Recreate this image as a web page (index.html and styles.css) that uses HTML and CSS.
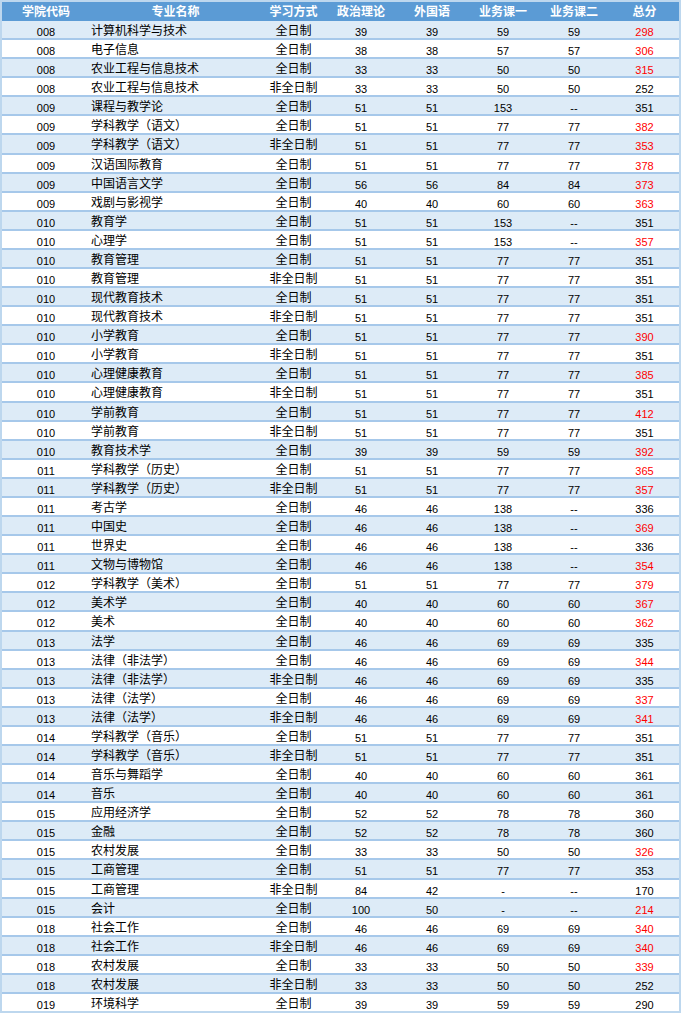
FILE: index.html
```html
<!DOCTYPE html>
<html lang="zh">
<head>
<meta charset="utf-8">
<title>分数线</title>
<link rel="stylesheet" href="styles.css">
</head>
<body>
<div class="sheet">
  <div class="row head"><span>学院代码</span><span>专业名称</span><span>学习方式</span><span>政治理论</span><span>外国语</span><span>业务课一</span><span>业务课二</span><span>总分</span></div>
  <div class="row"><span>008</span><span class="name">计算机科学与技术</span><span>全日制</span><span>39</span><span>39</span><span>59</span><span>59</span><span class="hi">298</span></div>
  <div class="row"><span>008</span><span class="name">电子信息</span><span>全日制</span><span>38</span><span>38</span><span>57</span><span>57</span><span class="hi">306</span></div>
  <div class="row"><span>008</span><span class="name">农业工程与信息技术</span><span>全日制</span><span>33</span><span>33</span><span>50</span><span>50</span><span class="hi">315</span></div>
  <div class="row"><span>008</span><span class="name">农业工程与信息技术</span><span>非全日制</span><span>33</span><span>33</span><span>50</span><span>50</span><span>252</span></div>
  <div class="row"><span>009</span><span class="name">课程与教学论</span><span>全日制</span><span>51</span><span>51</span><span>153</span><span>--</span><span>351</span></div>
  <div class="row"><span>009</span><span class="name">学科教学（语文）</span><span>全日制</span><span>51</span><span>51</span><span>77</span><span>77</span><span class="hi">382</span></div>
  <div class="row"><span>009</span><span class="name">学科教学（语文）</span><span>非全日制</span><span>51</span><span>51</span><span>77</span><span>77</span><span class="hi">353</span></div>
  <div class="row"><span>009</span><span class="name">汉语国际教育</span><span>全日制</span><span>51</span><span>51</span><span>77</span><span>77</span><span class="hi">378</span></div>
  <div class="row"><span>009</span><span class="name">中国语言文学</span><span>全日制</span><span>56</span><span>56</span><span>84</span><span>84</span><span class="hi">373</span></div>
  <div class="row"><span>009</span><span class="name">戏剧与影视学</span><span>全日制</span><span>40</span><span>40</span><span>60</span><span>60</span><span class="hi">363</span></div>
  <div class="row"><span>010</span><span class="name">教育学</span><span>全日制</span><span>51</span><span>51</span><span>153</span><span>--</span><span>351</span></div>
  <div class="row"><span>010</span><span class="name">心理学</span><span>全日制</span><span>51</span><span>51</span><span>153</span><span>--</span><span class="hi">357</span></div>
  <div class="row"><span>010</span><span class="name">教育管理</span><span>全日制</span><span>51</span><span>51</span><span>77</span><span>77</span><span>351</span></div>
  <div class="row"><span>010</span><span class="name">教育管理</span><span>非全日制</span><span>51</span><span>51</span><span>77</span><span>77</span><span>351</span></div>
  <div class="row"><span>010</span><span class="name">现代教育技术</span><span>全日制</span><span>51</span><span>51</span><span>77</span><span>77</span><span>351</span></div>
  <div class="row"><span>010</span><span class="name">现代教育技术</span><span>非全日制</span><span>51</span><span>51</span><span>77</span><span>77</span><span>351</span></div>
  <div class="row"><span>010</span><span class="name">小学教育</span><span>全日制</span><span>51</span><span>51</span><span>77</span><span>77</span><span class="hi">390</span></div>
  <div class="row"><span>010</span><span class="name">小学教育</span><span>非全日制</span><span>51</span><span>51</span><span>77</span><span>77</span><span>351</span></div>
  <div class="row"><span>010</span><span class="name">心理健康教育</span><span>全日制</span><span>51</span><span>51</span><span>77</span><span>77</span><span class="hi">385</span></div>
  <div class="row"><span>010</span><span class="name">心理健康教育</span><span>非全日制</span><span>51</span><span>51</span><span>77</span><span>77</span><span>351</span></div>
  <div class="row"><span>010</span><span class="name">学前教育</span><span>全日制</span><span>51</span><span>51</span><span>77</span><span>77</span><span class="hi">412</span></div>
  <div class="row"><span>010</span><span class="name">学前教育</span><span>非全日制</span><span>51</span><span>51</span><span>77</span><span>77</span><span>351</span></div>
  <div class="row"><span>010</span><span class="name">教育技术学</span><span>全日制</span><span>39</span><span>39</span><span>59</span><span>59</span><span class="hi">392</span></div>
  <div class="row"><span>011</span><span class="name">学科教学（历史）</span><span>全日制</span><span>51</span><span>51</span><span>77</span><span>77</span><span class="hi">365</span></div>
  <div class="row"><span>011</span><span class="name">学科教学（历史）</span><span>非全日制</span><span>51</span><span>51</span><span>77</span><span>77</span><span class="hi">357</span></div>
  <div class="row"><span>011</span><span class="name">考古学</span><span>全日制</span><span>46</span><span>46</span><span>138</span><span>--</span><span>336</span></div>
  <div class="row"><span>011</span><span class="name">中国史</span><span>全日制</span><span>46</span><span>46</span><span>138</span><span>--</span><span class="hi">369</span></div>
  <div class="row"><span>011</span><span class="name">世界史</span><span>全日制</span><span>46</span><span>46</span><span>138</span><span>--</span><span>336</span></div>
  <div class="row"><span>011</span><span class="name">文物与博物馆</span><span>全日制</span><span>46</span><span>46</span><span>138</span><span>--</span><span class="hi">354</span></div>
  <div class="row"><span>012</span><span class="name">学科教学（美术）</span><span>全日制</span><span>51</span><span>51</span><span>77</span><span>77</span><span class="hi">379</span></div>
  <div class="row"><span>012</span><span class="name">美术学</span><span>全日制</span><span>40</span><span>40</span><span>60</span><span>60</span><span class="hi">367</span></div>
  <div class="row"><span>012</span><span class="name">美术</span><span>全日制</span><span>40</span><span>40</span><span>60</span><span>60</span><span class="hi">362</span></div>
  <div class="row"><span>013</span><span class="name">法学</span><span>全日制</span><span>46</span><span>46</span><span>69</span><span>69</span><span>335</span></div>
  <div class="row"><span>013</span><span class="name">法律（非法学）</span><span>全日制</span><span>46</span><span>46</span><span>69</span><span>69</span><span class="hi">344</span></div>
  <div class="row"><span>013</span><span class="name">法律（非法学）</span><span>非全日制</span><span>46</span><span>46</span><span>69</span><span>69</span><span>335</span></div>
  <div class="row"><span>013</span><span class="name">法律（法学）</span><span>全日制</span><span>46</span><span>46</span><span>69</span><span>69</span><span class="hi">337</span></div>
  <div class="row"><span>013</span><span class="name">法律（法学）</span><span>非全日制</span><span>46</span><span>46</span><span>69</span><span>69</span><span class="hi">341</span></div>
  <div class="row"><span>014</span><span class="name">学科教学（音乐）</span><span>全日制</span><span>51</span><span>51</span><span>77</span><span>77</span><span>351</span></div>
  <div class="row"><span>014</span><span class="name">学科教学（音乐）</span><span>非全日制</span><span>51</span><span>51</span><span>77</span><span>77</span><span>351</span></div>
  <div class="row"><span>014</span><span class="name">音乐与舞蹈学</span><span>全日制</span><span>40</span><span>40</span><span>60</span><span>60</span><span>361</span></div>
  <div class="row"><span>014</span><span class="name">音乐</span><span>全日制</span><span>40</span><span>40</span><span>60</span><span>60</span><span>361</span></div>
  <div class="row"><span>015</span><span class="name">应用经济学</span><span>全日制</span><span>52</span><span>52</span><span>78</span><span>78</span><span>360</span></div>
  <div class="row"><span>015</span><span class="name">金融</span><span>全日制</span><span>52</span><span>52</span><span>78</span><span>78</span><span>360</span></div>
  <div class="row"><span>015</span><span class="name">农村发展</span><span>全日制</span><span>33</span><span>33</span><span>50</span><span>50</span><span class="hi">326</span></div>
  <div class="row"><span>015</span><span class="name">工商管理</span><span>全日制</span><span>51</span><span>51</span><span>77</span><span>77</span><span>353</span></div>
  <div class="row"><span>015</span><span class="name">工商管理</span><span>非全日制</span><span>84</span><span>42</span><span>-</span><span>--</span><span>170</span></div>
  <div class="row"><span>015</span><span class="name">会计</span><span>全日制</span><span>100</span><span>50</span><span>-</span><span>--</span><span class="hi">214</span></div>
  <div class="row"><span>018</span><span class="name">社会工作</span><span>全日制</span><span>46</span><span>46</span><span>69</span><span>69</span><span class="hi">340</span></div>
  <div class="row"><span>018</span><span class="name">社会工作</span><span>非全日制</span><span>46</span><span>46</span><span>69</span><span>69</span><span class="hi">340</span></div>
  <div class="row"><span>018</span><span class="name">农村发展</span><span>全日制</span><span>33</span><span>33</span><span>50</span><span>50</span><span class="hi">339</span></div>
  <div class="row"><span>018</span><span class="name">农村发展</span><span>非全日制</span><span>33</span><span>33</span><span>50</span><span>50</span><span>252</span></div>
  <div class="row"><span>019</span><span class="name">环境科学</span><span>全日制</span><span>39</span><span>39</span><span>59</span><span>59</span><span>290</span></div>
</div>
</body>
</html>
```
FILE: styles.css
```css
html, body {
  margin: 0;
  padding: 0;
  background: #ffffff;
}

.sheet {
  width: 677px;
  border: 2px solid #bdd7ee;
  font-family: "Liberation Sans", "Noto Sans CJK SC", sans-serif;
  font-size: 11px;
  color: #000000;
}

.row {
  display: grid;
  grid-template-columns: 88px 171px 65px 70px 72px 70px 72px 69px;
  height: 17.08px;
  border-bottom: 2px solid #a6c8ea;
  align-items: start;
  white-space: nowrap;
  overflow: visible;
}

.row > span {
  text-align: center;
  padding-top: 4px;
  line-height: 14px;
}

.row > .name,
.row > span:nth-child(3) {
  font-size: 12px;
  padding-top: 3px;
  line-height: 15px;
}

.row > .name {
  text-align: left;
  padding-left: 1px;
}

.row:nth-child(even) {
  background: #ddebf7;
}

.row:nth-child(odd) {
  background: #ffffff;
}

.row:last-child {
  border-bottom: none;
}

.row.head {
  height: 19px;
  border-bottom: none;
  background: #5b9bd5;
  color: #ffffff;
  font-weight: bold;
  align-items: start;
}

.row.head > span {
  font-size: 12px;
  text-align: center;
  padding-top: 2px;
  line-height: 17px;
}

.hi {
  color: #ff0000;
}
```
